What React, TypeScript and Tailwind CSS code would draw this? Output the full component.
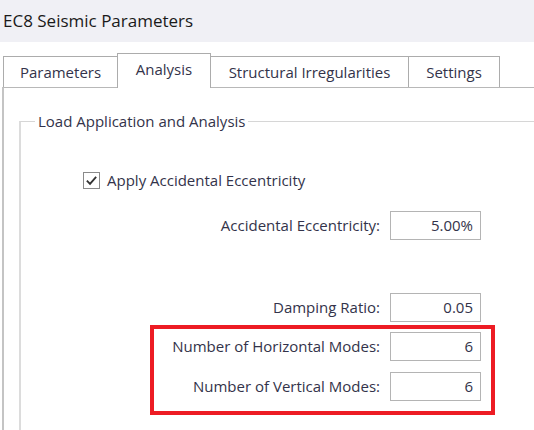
const font = { fontFamily: '"Open Sans", "Noto Sans", sans-serif' }

function Tab({ label, width, selected }: { label: string; width: number; selected?: boolean }) {
  return (
    <div
      className={
        'flex items-center justify-center border border-b-0 border-[#acacac] bg-white text-[15px] text-[#33334a] -ml-px first:ml-0 ' +
        (selected ? 'relative z-10 h-[35px] -mb-px pb-[3px]' : 'h-[31px]')
      }
      style={{ width }}
    >
      {label}
    </div>
  )
}

function Field({ label, value, labelWidth }: { label: string; value: string; labelWidth: number }) {
  return (
    <div className="flex h-[29px] items-center">
      <span className="text-right text-[15px] text-[#33334a]" style={{ width: labelWidth }}>
        {label}
      </span>
      <div className="ml-[10px] flex h-[29px] w-[91px] items-center justify-end border border-[#b4b4b4] pr-[7px] text-[15px] text-[#33334a]">
        {value}
      </div>
    </div>
  )
}

export default function App() {
  return (
    <div className="h-[430px] w-[534px] overflow-hidden bg-white" style={font}>
      <div className="flex h-[42px] items-center bg-[#f0f0f5] pl-[3px] text-[17px] text-[#1a1a1a]">
        EC8 Seismic Parameters
      </div>

      <div className="flex items-end pl-[3px] pt-[11px]">
        <Tab label="Parameters" width={115} />
        <Tab label="Analysis" width={94} selected />
        <Tab label="Structural Irregularities" width={199} />
        <Tab label="Settings" width={92} />
      </div>

      <div className="ml-[2px] h-[400px] border-l-2 border-t border-[#b8b8b8] border-l-[#c4c4c4]">
        <fieldset className="ml-[15px] mt-[22px] h-[400px] border-l-2 border-t border-[#dcdcdc] border-t-[#d6d6d6]">
          <legend className="ml-[14px] px-[3px] text-[15px] leading-[22px] text-[#33334a]">
            Load Application and Analysis
          </legend>

          <div className="ml-[62px] mt-[40px] flex h-[17px] items-center">
            <div className="flex h-[17px] w-[17px] items-center justify-center border border-[#8a8a8a] bg-white">
              <svg width="13" height="13" viewBox="0 0 14 14">
                <path d="M2 7.2 L5.4 10.6 L12 3.2" fill="none" stroke="#333" strokeWidth="2" />
              </svg>
            </div>
            <span className="ml-[7px] text-[15px] text-[#33334a]">Apply Accidental Eccentricity</span>
          </div>

          <div className="mt-[22px]">
            <Field label="Accidental Eccentricity:" value="5.00%" labelWidth={359} />
          </div>

          <div className="mt-[53px]">
            <Field label="Damping Ratio:" value="0.05" labelWidth={359} />
          </div>

          <div className="ml-[129px] mt-[3px] w-[345px] border-4 border-[#ed1c24] pb-[10px] pt-[3px]">
            <Field label="Number of Horizontal Modes:" value="6" labelWidth={226} />
            <div className="mt-[11px]">
              <Field label="Number of Vertical Modes:" value="6" labelWidth={226} />
            </div>
          </div>
        </fieldset>
      </div>
    </div>
  )
}
